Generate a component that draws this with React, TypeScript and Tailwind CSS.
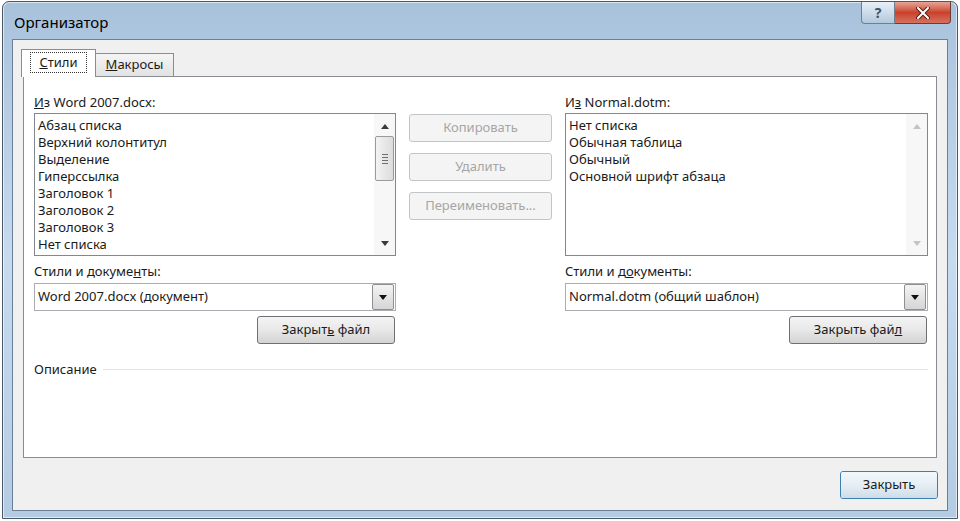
import React from "react";

const LEFT_STYLES = [
  "Абзац списка",
  "Верхний колонтитул",
  "Выделение",
  "Гиперссылка",
  "Заголовок 1",
  "Заголовок 2",
  "Заголовок 3",
  "Нет списка",
];

const RIGHT_STYLES = ["Нет списка", "Обычная таблица", "Обычный", "Основной шрифт абзаца"];

function Arrow({ dir, color }: { dir: "up" | "down"; color: string }) {
  return (
    <svg width="8" height="5" viewBox="0 0 8 5">
      {dir === "up" ? (
        <path d="M0 5 L4 0 L8 5 Z" fill={color} />
      ) : (
        <path d="M0 0 L8 0 L4 5 Z" fill={color} />
      )}
    </svg>
  );
}

function ScrollBar({ enabled }: { enabled: boolean }) {
  const c = enabled ? "#3a3a3a" : "#c4c4c4";
  return (
    <div className="flex w-[21px] flex-col items-center bg-[#f7f7f7]">
      <div className="flex h-[22px] w-full items-center justify-center pt-[2px]">
        <Arrow dir="up" color={c} />
      </div>
      {enabled && (
        <div className="flex h-[45px] w-[19px] flex-col items-center justify-center gap-[2px] rounded-[2px] border border-[#9a9a9a] bg-gradient-to-r from-[#f3f3f3] to-[#dcdcdc]">
          <div className="h-px w-[6px] bg-[#707070]" />
          <div className="h-px w-[6px] bg-[#707070]" />
          <div className="h-px w-[6px] bg-[#707070]" />
          <div className="h-px w-[6px] bg-[#707070]" />
        </div>
      )}
      <div className="flex-1" />
      <div className="flex h-[22px] w-full items-center justify-center pb-[2px]">
        <Arrow dir="down" color={c} />
      </div>
    </div>
  );
}

function ListBox({ items, scroll }: { items: string[]; scroll: boolean }) {
  return (
    <div className="flex h-[143px] border border-[#828790] bg-white">
      <div className="flex-1 pl-[3px] pt-[3px] leading-[17px] text-[#1a1a1a]">
        {items.map((it) => (
          <div key={it}>{it}</div>
        ))}
      </div>
      <ScrollBar enabled={scroll} />
    </div>
  );
}

function Combo({ value }: { value: string }) {
  return (
    <div className="flex h-[28px] items-center border border-[#abadb3] bg-white pl-[3px]">
      <div className="flex-1 text-[#1a1a1a]">{value}</div>
      <div className="mr-px flex h-[26px] w-[22px] items-center justify-center rounded-[2px] border border-[#8f8f8f] bg-gradient-to-b from-[#f4f4f4] to-[#d5d5d5]">
        <Arrow dir="down" color="#111" />
      </div>
    </div>
  );
}

function Button({ children, className = "" }: { children: React.ReactNode; className?: string }) {
  return (
    <div
      className={`flex h-[28px] items-center justify-center rounded-[3px] border border-[#707070] bg-gradient-to-b from-[#f4f4f4] via-[#e8e8e8] to-[#d3d3d3] text-[#1a1a1a] ${className}`}
    >
      <span>{children}</span>
    </div>
  );
}

function DisabledButton({ children }: { children: React.ReactNode }) {
  return (
    <div className="flex h-[28px] w-[143px] items-center justify-center rounded-[3px] border border-[#c2c5c8] bg-[#f4f4f4] text-[#a6a6a6]">
      {children}
    </div>
  );
}

function Side({
  label,
  items,
  scroll,
  docsLabel,
  combo,
  closeLabel,
}: {
  label: React.ReactNode;
  items: string[];
  scroll: boolean;
  docsLabel: React.ReactNode;
  combo: string;
  closeLabel: React.ReactNode;
}) {
  return (
    <div className="flex flex-col">
      <div className="h-[17px] leading-[17px] text-[#1a1a1a]">{label}</div>
      <div className="mt-[2px]">
        <ListBox items={items} scroll={scroll} />
      </div>
      <div className="mt-[7px] h-[17px] leading-[17px] text-[#1a1a1a]">{docsLabel}</div>
      <div className="mt-[3px]">
        <Combo value={combo} />
      </div>
      <div className="mt-[5px] flex justify-end pr-px">
        <Button className="w-[138px]">{closeLabel}</Button>
      </div>
    </div>
  );
}

export default function App() {
  return (
    <div className="h-[521px] w-[960px] overflow-hidden bg-white pl-[2px] pt-px font-['Noto_Sans',sans-serif] text-[13px]">
      <div className="flex h-[518px] w-[956px] flex-col rounded-t-[7px] border border-[#4a5866] bg-gradient-to-b from-[#a9c2dc] via-[#c6dbf0] to-[#b3cbe3] px-[9px] pb-[7px] shadow-[inset_0_0_0_1px_rgba(255,255,255,0.6)]">
        {/* title bar */}
        <div className="flex h-[37px] items-start justify-between">
          <div className="pl-[2px] pt-[9px] text-[15px] text-black">Организатор</div>
          <div className="mr-[-3px] flex">
            <div className="flex h-[22px] w-[34px] items-center justify-center rounded-bl-[4px] border border-t-0 border-[#6f7f90] bg-gradient-to-b from-[#e8f0f8] to-[#b4c8dc] text-[14px] font-bold text-[#3d5068]">
              ?
            </div>
            <div className="flex h-[22px] w-[56px] items-center justify-center rounded-br-[4px] border border-l-0 border-t-0 border-[#6e3a33] bg-gradient-to-b from-[#e4a596] via-[#c9412c] to-[#d6705c]">
              <svg width="14" height="12" viewBox="0 0 14 12">
                <path d="M2 1 L12 11 M12 1 L2 11" stroke="#5a1e16" strokeWidth="4" strokeLinecap="round" />
                <path d="M2 1 L12 11 M12 1 L2 11" stroke="#ffffff" strokeWidth="2" strokeLinecap="round" />
              </svg>
            </div>
          </div>
        </div>

        {/* client area */}
        <div className="flex flex-1 flex-col border border-[#6d7f93] bg-[#f0f0f0] pl-[8px] pr-[9px]">
          {/* tabs */}
          <div className="mt-[9px] flex items-end">
            <div className="relative z-10 -mb-px flex h-[28px] w-[75px] items-start justify-center border border-b-0 border-[#898c95] bg-white pt-[2px]">
              <div className="border border-dotted border-[#333] px-[8px] leading-[19px] text-[#1a1a1a]">
                <span className="underline">С</span>тили
              </div>
            </div>
            <div className="flex h-[23px] w-[78px] items-center justify-center border border-b-0 border-l-0 border-[#898c95] bg-gradient-to-b from-[#f5f5f5] to-[#e2e2e2] text-[#1a1a1a]">
              <span>
                <span className="underline">М</span>акросы
              </span>
            </div>
          </div>

          {/* tab panel */}
          <div className="ml-[2px] mr-px flex h-[382px] flex-col border border-[#898c95] bg-white pl-[10px] pr-[8px] pt-[17px]">
            <div className="grid grid-cols-[362px_1fr_363px] gap-x-[13px]">
              <Side
                label={
                  <>
                    <span className="underline">И</span>з Word 2007.docx:
                  </>
                }
                items={LEFT_STYLES}
                scroll
                docsLabel={
                  <>
                    Стили и докуме<span className="underline">н</span>ты:
                  </>
                }
                combo="Word 2007.docx (документ)"
                closeLabel={
                  <>
                    Закрыт<span className="underline">ь</span> файл
                  </>
                }
              />
              <div className="flex flex-col gap-[11px] pt-[20px]">
                <DisabledButton>Копировать</DisabledButton>
                <DisabledButton>Удалить</DisabledButton>
                <DisabledButton>Переименовать...</DisabledButton>
              </div>
              <Side
                label={
                  <>
                    И<span className="underline">з</span> Normal.dotm:
                  </>
                }
                items={RIGHT_STYLES}
                scroll={false}
                docsLabel={
                  <>
                    Стили и д<span className="underline">о</span>кументы:
                  </>
                }
                combo="Normal.dotm (общий шаблон)"
                closeLabel={
                  <>
                    Закрыть фай<span className="underline">л</span>
                  </>
                }
              />
            </div>
            <div className="mt-[17px] flex items-center gap-[6px]">
              <div className="leading-[17px] text-[#1a1a1a]">Описание</div>
              <div className="h-px flex-1 bg-[#dde3e8]" />
            </div>
          </div>

          {/* footer */}
          <div className="flex flex-1 items-center justify-end">
            <div className="mt-[2px] rounded-[3px] border border-[#3c7fb1] shadow-[inset_0_0_0_1px_#9ad6f5]">
              <div className="flex h-[26px] w-[96px] items-center justify-center rounded-[2px] bg-gradient-to-b from-[#f2f8fc] via-[#e6eef4] to-[#cfdde8] text-[#1a1a1a]">
                Закрыть
              </div>
            </div>
          </div>
        </div>
      </div>
    </div>
  );
}
